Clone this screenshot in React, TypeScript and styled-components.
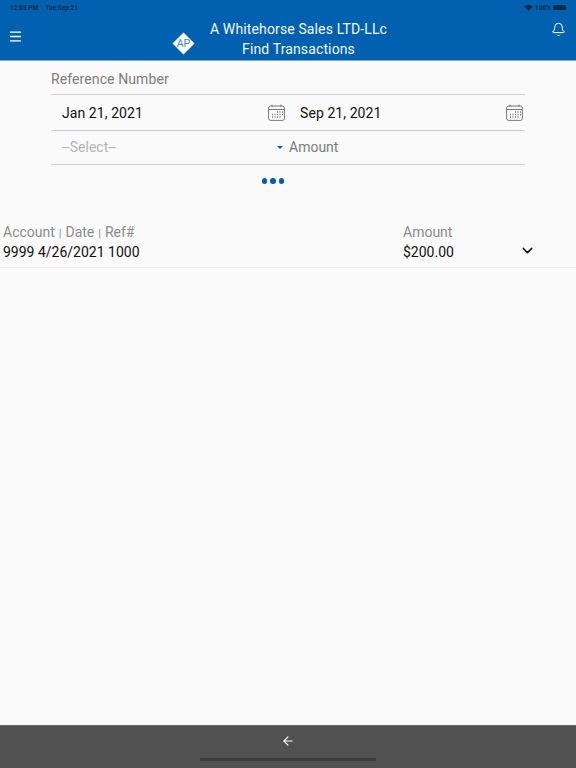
import React from 'react';
import styled, { createGlobalStyle } from 'styled-components';
import { ChevronDown, ArrowLeft, Bell, Menu } from 'lucide-react';

const GlobalStyle = createGlobalStyle`
  html, body {
    margin: 0;
    padding: 0;
    background: #fafafa;
    font-family: Roboto, "Liberation Sans", sans-serif;
  }
`;

const Page = styled.div`
  width: 576px;
  height: 768px;
  display: flex;
  flex-direction: column;
  overflow: hidden;
  background: #fafafa;
`;

const Header = styled.header`
  height: 60px;
  flex: none;
  background: #0161b0;
  border-bottom: 1px solid #7fa6c9;
  display: flex;
  flex-direction: column;
  color: #fff;
`;

const StatusBar = styled.div`
  height: 15px;
  padding: 0 10px 0 10px;
  display: flex;
  align-items: center;
  justify-content: space-between;
  font-size: 6.5px;
  font-weight: 700;
  color: #0c2c4c;
`;

const StatusGroup = styled.div`
  display: flex;
  align-items: center;
  gap: ${(p: { $gap: number }) => p.$gap}px;
`;

const Battery = styled.span`
  width: 13px;
  height: 5px;
  border-radius: 1px;
  background: #0c2c4c;
`;

const TitleBar = styled.div`
  flex: 1;
  display: grid;
  grid-template-columns: 170px 40px auto 1fr;
  align-items: center;
`;

const MenuButton = styled.div`
  padding-left: 8px;
  display: flex;
  margin-top: -2px;
`;

const LogoWrap = styled.div`
  display: flex;
  justify-content: flex-start;
  margin-top: 11px;
  padding-left: 2px;
`;

const Titles = styled.div`
  text-align: center;
  font-size: 14px;
  line-height: 20px;
  letter-spacing: 0.13px;
  margin-top: 2px;
  color: #f4f8fb;
`;

const BellButton = styled.div`
  display: flex;
  justify-content: flex-end;
  padding-right: 10px;
  margin-top: -16px;
`;

const Filters = styled.section`
  width: 474px;
  margin: 0 0 0 51px;
  display: flex;
  flex-direction: column;
`;

const Row = styled.div`
  display: flex;
  align-items: center;
  height: ${(p: { $h: number }) => p.$h}px;
  border-bottom: 1px solid #cfcfcf;
  box-sizing: border-box;
`;

const RefLabel = styled.div`
  font-size: 14px;
  color: #7d7d7d;
  letter-spacing: 0.1px;
  padding-top: 2px;
`;

const DateCell = styled.div`
  display: flex;
  align-items: center;
  justify-content: space-between;
  box-sizing: border-box;
  width: ${(p: { $w: number }) => p.$w}px;
  padding: 0 ${(p: { $right: number }) => p.$right}px 0 ${(p: { $left: number }) => p.$left}px;
  font-size: 14px;
  letter-spacing: 0.08px;
  color: #111;
`;

const SelectCell = styled.div`
  width: 238px;
  box-sizing: border-box;
  padding: 0 6px 0 11px;
  display: flex;
  align-items: center;
  justify-content: space-between;
  font-size: 14px;
  color: #b4b4b4;
  margin-top: -1px;
`;

const Caret = styled.span`
  width: 0;
  height: 0;
  border-left: 3px solid transparent;
  border-right: 3px solid transparent;
  border-top: 3px solid #0161b0;
`;

const AmountInput = styled.div`
  flex: 1;
  font-size: 14px;
  color: #7d7d7d;
  margin-top: -1px;
`;

const Dots = styled.div`
  display: flex;
  justify-content: center;
  gap: 3px;
  margin: 13px 30px 0 0;
  height: 6px;
`;

const Dot = styled.span`
  width: 5.5px;
  height: 5.5px;
  border-radius: 50%;
  background: #0161b0;
`;

const Results = styled.section`
  margin-top: 38px;
  padding: 0 3px;
  height: 45px;
  box-sizing: content-box;
  display: grid;
  grid-template-columns: 400px 100px 1fr;
  border-bottom: 1px solid #eeeeee;
`;

const Column = styled.div`
  display: flex;
  flex-direction: column;
  font-size: 14px;
  line-height: 20px;
`;

const ColumnLabel = styled.div`
  color: #8c8c8c;
`;

const ColumnValue = styled.div`
  color: #111;
`;

const Separator = styled.span`
  font-size: 11px;
  line-height: 0;
  padding: 0 0.5px;
`;

const Expand = styled.div`
  display: flex;
  padding: 20px 0 0 16px;
  color: #111;
`;

const Spacer = styled.div`
  flex: 1;
`;

const Footer = styled.footer`
  height: 43px;
  flex: none;
  background: #515151;
  border-top: 1px solid #6a6a6a;
  box-sizing: border-box;
  display: flex;
  flex-direction: column;
  align-items: center;
`;

const BackButton = styled.div`
  display: flex;
  margin-top: 8px;
  color: #fff;
`;

const HomeBar = styled.div`
  width: 176px;
  height: 3px;
  margin-top: 10px;
  background: #3b3b3b;
`;

function Wifi() {
  return (
    <svg width="9" height="7" viewBox="0 0 16 12">
      <path d="M8 12 L0 4 Q8 -2 16 4 Z" fill="#0c2c4c" />
    </svg>
  );
}

function Logo() {
  return (
    <svg width="23" height="23" viewBox="0 0 24 24">
      <path d="M12 0.5 L23.5 12 L12 23.5 L0.5 12 Z" fill="#fff" />
      <text x="12" y="16" textAnchor="middle" fontSize="11" fontFamily="Roboto, sans-serif" fill="#3f86c2">AP</text>
    </svg>
  );
}

function CalendarIcon() {
  return (
    <svg width="17" height="17" viewBox="0 0 17 17" fill="none" stroke="#777">
      <rect x="0.6" y="2" width="15.8" height="14.4" rx="2" />
      <path d="M0.6 5.5 H16.4 M4 0.6 V3 M13 0.6 V3" />
      <path
        d="M9 8 h1 M11.5 8 h1 M14 8 h1 M4 10.5 h1 M6.5 10.5 h1 M9 10.5 h1 M11.5 10.5 h1 M14 10.5 h1 M4 13 h1 M6.5 13 h1 M9 13 h1 M11.5 13 h1"
        strokeWidth="1.4"
      />
    </svg>
  );
}

export default function App() {
  return (
    <Page>
      <GlobalStyle />
      <Header>
        <StatusBar>
          <StatusGroup $gap={7}>
            <span>12:03 PM</span>
            <span>Tue Sep 21</span>
          </StatusGroup>
          <StatusGroup $gap={2}>
            <Wifi />
            <span>100%</span>
            <Battery />
          </StatusGroup>
        </StatusBar>
        <TitleBar>
          <MenuButton>
            <Menu size={15} strokeWidth={2.2} />
          </MenuButton>
          <LogoWrap>
            <Logo />
          </LogoWrap>
          <Titles>
            <div>A Whitehorse Sales LTD-LLc</div>
            <div>Find Transactions</div>
          </Titles>
          <BellButton>
            <Bell size={15} strokeWidth={1.6} />
          </BellButton>
        </TitleBar>
      </Header>
      <Filters>
        <Row $h={34}>
          <RefLabel>Reference Number</RefLabel>
        </Row>
        <Row $h={36}>
          <DateCell $w={235} $left={11} $right={1}>
            <span>Jan 21, 2021</span>
            <CalendarIcon />
          </DateCell>
          <DateCell $w={239} $left={14} $right={2}>
            <span>Sep 21, 2021</span>
            <CalendarIcon />
          </DateCell>
        </Row>
        <Row $h={34}>
          <SelectCell>
            <span>--Select--</span>
            <Caret />
          </SelectCell>
          <AmountInput>Amount</AmountInput>
        </Row>
        <Dots>
          <Dot />
          <Dot />
          <Dot />
        </Dots>
      </Filters>
      <Results>
        <Column>
          <ColumnLabel>Account <Separator>|</Separator> Date <Separator>|</Separator> Ref#</ColumnLabel>
          <ColumnValue>9999 4/26/2021 1000</ColumnValue>
        </Column>
        <Column>
          <ColumnLabel>Amount</ColumnLabel>
          <ColumnValue>$200.00</ColumnValue>
        </Column>
        <Expand>
          <ChevronDown size={17} strokeWidth={2} />
        </Expand>
      </Results>
      <Spacer />
      <Footer>
        <BackButton>
          <ArrowLeft size={14} strokeWidth={2} />
        </BackButton>
        <HomeBar />
      </Footer>
    </Page>
  );
}
